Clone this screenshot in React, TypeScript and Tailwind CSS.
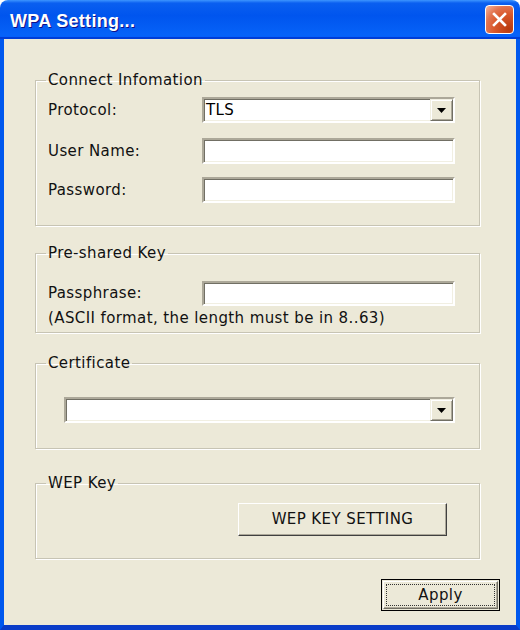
import React from "react";

const sunken =
  "bg-white border-2 border-t-[#aca899] border-l-[#aca899] border-b-white border-r-white shadow-[inset_1px_1px_0_#716f64,inset_-1px_-1px_0_#f1efe2]";

function DropButton() {
  return (
    <div className="flex h-full w-[23px] items-center justify-center bg-[#ece9d8] border border-t-[#f1efe2] border-l-[#f1efe2] border-b-[#716f64] border-r-[#716f64] shadow-[inset_1px_1px_0_#fff,inset_-1px_-1px_0_#aca899]">
      <svg width="9" height="5" viewBox="0 0 9 5">
        <path d="M0 0h9L4.5 5z" fill="#000" />
      </svg>
    </div>
  );
}

function Combo({ value, className }: { value?: string; className: string }) {
  return (
    <div className={`flex items-stretch ${sunken} ${className}`}>
      <div className="flex flex-1 items-center pl-[2px] text-black">{value}</div>
      <DropButton />
    </div>
  );
}

function Field({ className }: { className: string }) {
  return <div className={`${sunken} ${className}`} />;
}

function Group({
  title,
  className,
  children,
}: {
  title: string;
  className: string;
  children: React.ReactNode;
}) {
  return (
    <fieldset
      className={`ml-[31px] w-[445px] border border-[#c7c4b4] px-[12px] shadow-[inset_1px_1px_0_#fff,1px_1px_0_#fff] ${className}`}
    >
      <legend className="-ml-[2px] px-[2px] leading-[18px] text-[#111]">{title}</legend>
      {children}
    </fieldset>
  );
}

function Row({ label, children }: { label: string; children: React.ReactNode }) {
  return (
    <div className="flex items-center">
      <div className="w-[154px] text-[#111]">{label}</div>
      {children}
    </div>
  );
}

export default function App() {
  return (
    <div
      className="h-[630px] w-[520px] bg-white text-[15px] tracking-[0.4px]"
      style={{ fontFamily: '"DejaVu Sans", Verdana, sans-serif' }}
    >
      <div className="flex h-full flex-col overflow-hidden rounded-t-[8px]">
        {/* Title bar */}
        <div className="flex h-[39px] shrink-0 items-center justify-between bg-[linear-gradient(180deg,#3d95ff,#0a5ff0_8%,#0055ee_40%,#0662f8_88%,#0662f8_93%,#005bff_95%,#003dd7_96%,#003dd7)] pl-[10px] pr-[6px]">
          <div
            className="pt-[4px] text-[18px] font-bold tracking-[0.3px] text-white [text-shadow:1px_1px_0_#0f1089]"
            style={{ fontFamily: '"Liberation Sans", Arial, sans-serif' }}
          >
            WPA Setting...
          </div>
          <div className="flex h-[29px] w-[29px] items-center justify-center rounded-[4px] border border-white bg-[radial-gradient(circle_at_85%_85%,#b83a0e_0%,#d9582b_45%,#e27450_70%,#f5b79f_100%)]">
            <svg width="17" height="17" viewBox="0 0 17 17">
              <path
                d="M3 3L14 14M14 3L3 14"
                stroke="#fff"
                strokeWidth="2.6"
                strokeLinecap="square"
              />
            </svg>
          </div>
        </div>

        {/* Client */}
        <div className="flex flex-1 flex-col border-x-4 border-b-[5px] border-x-[#0058ee] border-b-[#0a3cc8] bg-[#ece9d8]">
          <Group title="Connect Infomation" className="mt-[32px] pt-[8px] pb-[22px]">
            <Row label="Protocol:">
              <Combo value="TLS" className="h-[26px] w-[253px]" />
            </Row>
            <div className="mt-[15px]">
              <Row label="User Name:">
                <Field className="h-[26px] w-[253px]" />
              </Row>
            </div>
            <div className="mt-[13px]">
              <Row label="Password:">
                <Field className="h-[26px] w-[253px]" />
              </Row>
            </div>
          </Group>

          <Group title="Pre-shared Key" className="mt-[18px] pt-[19px] pb-[5px]">
            <Row label="Passphrase:">
              <Field className="h-[25px] w-[253px]" />
            </Row>
            <div className="mt-[3px] leading-[18px] text-[#111]">
              (ASCII format, the length must be in 8..63)
            </div>
          </Group>

          <Group title="Certificate" className="mt-[21px] pt-[25px] pb-[25px]">
            <Combo className="ml-[16px] h-[26px] w-[391px]" />
          </Group>

          <Group title="WEP Key" className="mt-[25px] pt-[11px] pb-[22px]">
            <button className="ml-[190px] flex h-[33px] w-[209px] items-center justify-center border border-t-white border-l-white border-b-[#404040] border-r-[#404040] bg-[#ece9d8] text-[#111] shadow-[inset_-1px_-1px_0_#aca899]">
              WEP KEY SETTING
            </button>
          </Group>

          <div className="mt-[20px] flex justify-end pr-[16px]">
            <button className="h-[32px] w-[119px] border border-black bg-[#ece9d8] p-[1px]">
              <div className="flex h-full w-full items-center justify-center border border-t-white border-l-white border-b-[#716f64] border-r-[#716f64] shadow-[inset_-1px_-1px_0_#aca899] p-[2px]">
                <div className="flex h-full w-full items-center justify-center border border-dotted border-[#333] text-[#111]">
                  Apply
                </div>
              </div>
            </button>
          </div>
        </div>
      </div>
    </div>
  );
}
